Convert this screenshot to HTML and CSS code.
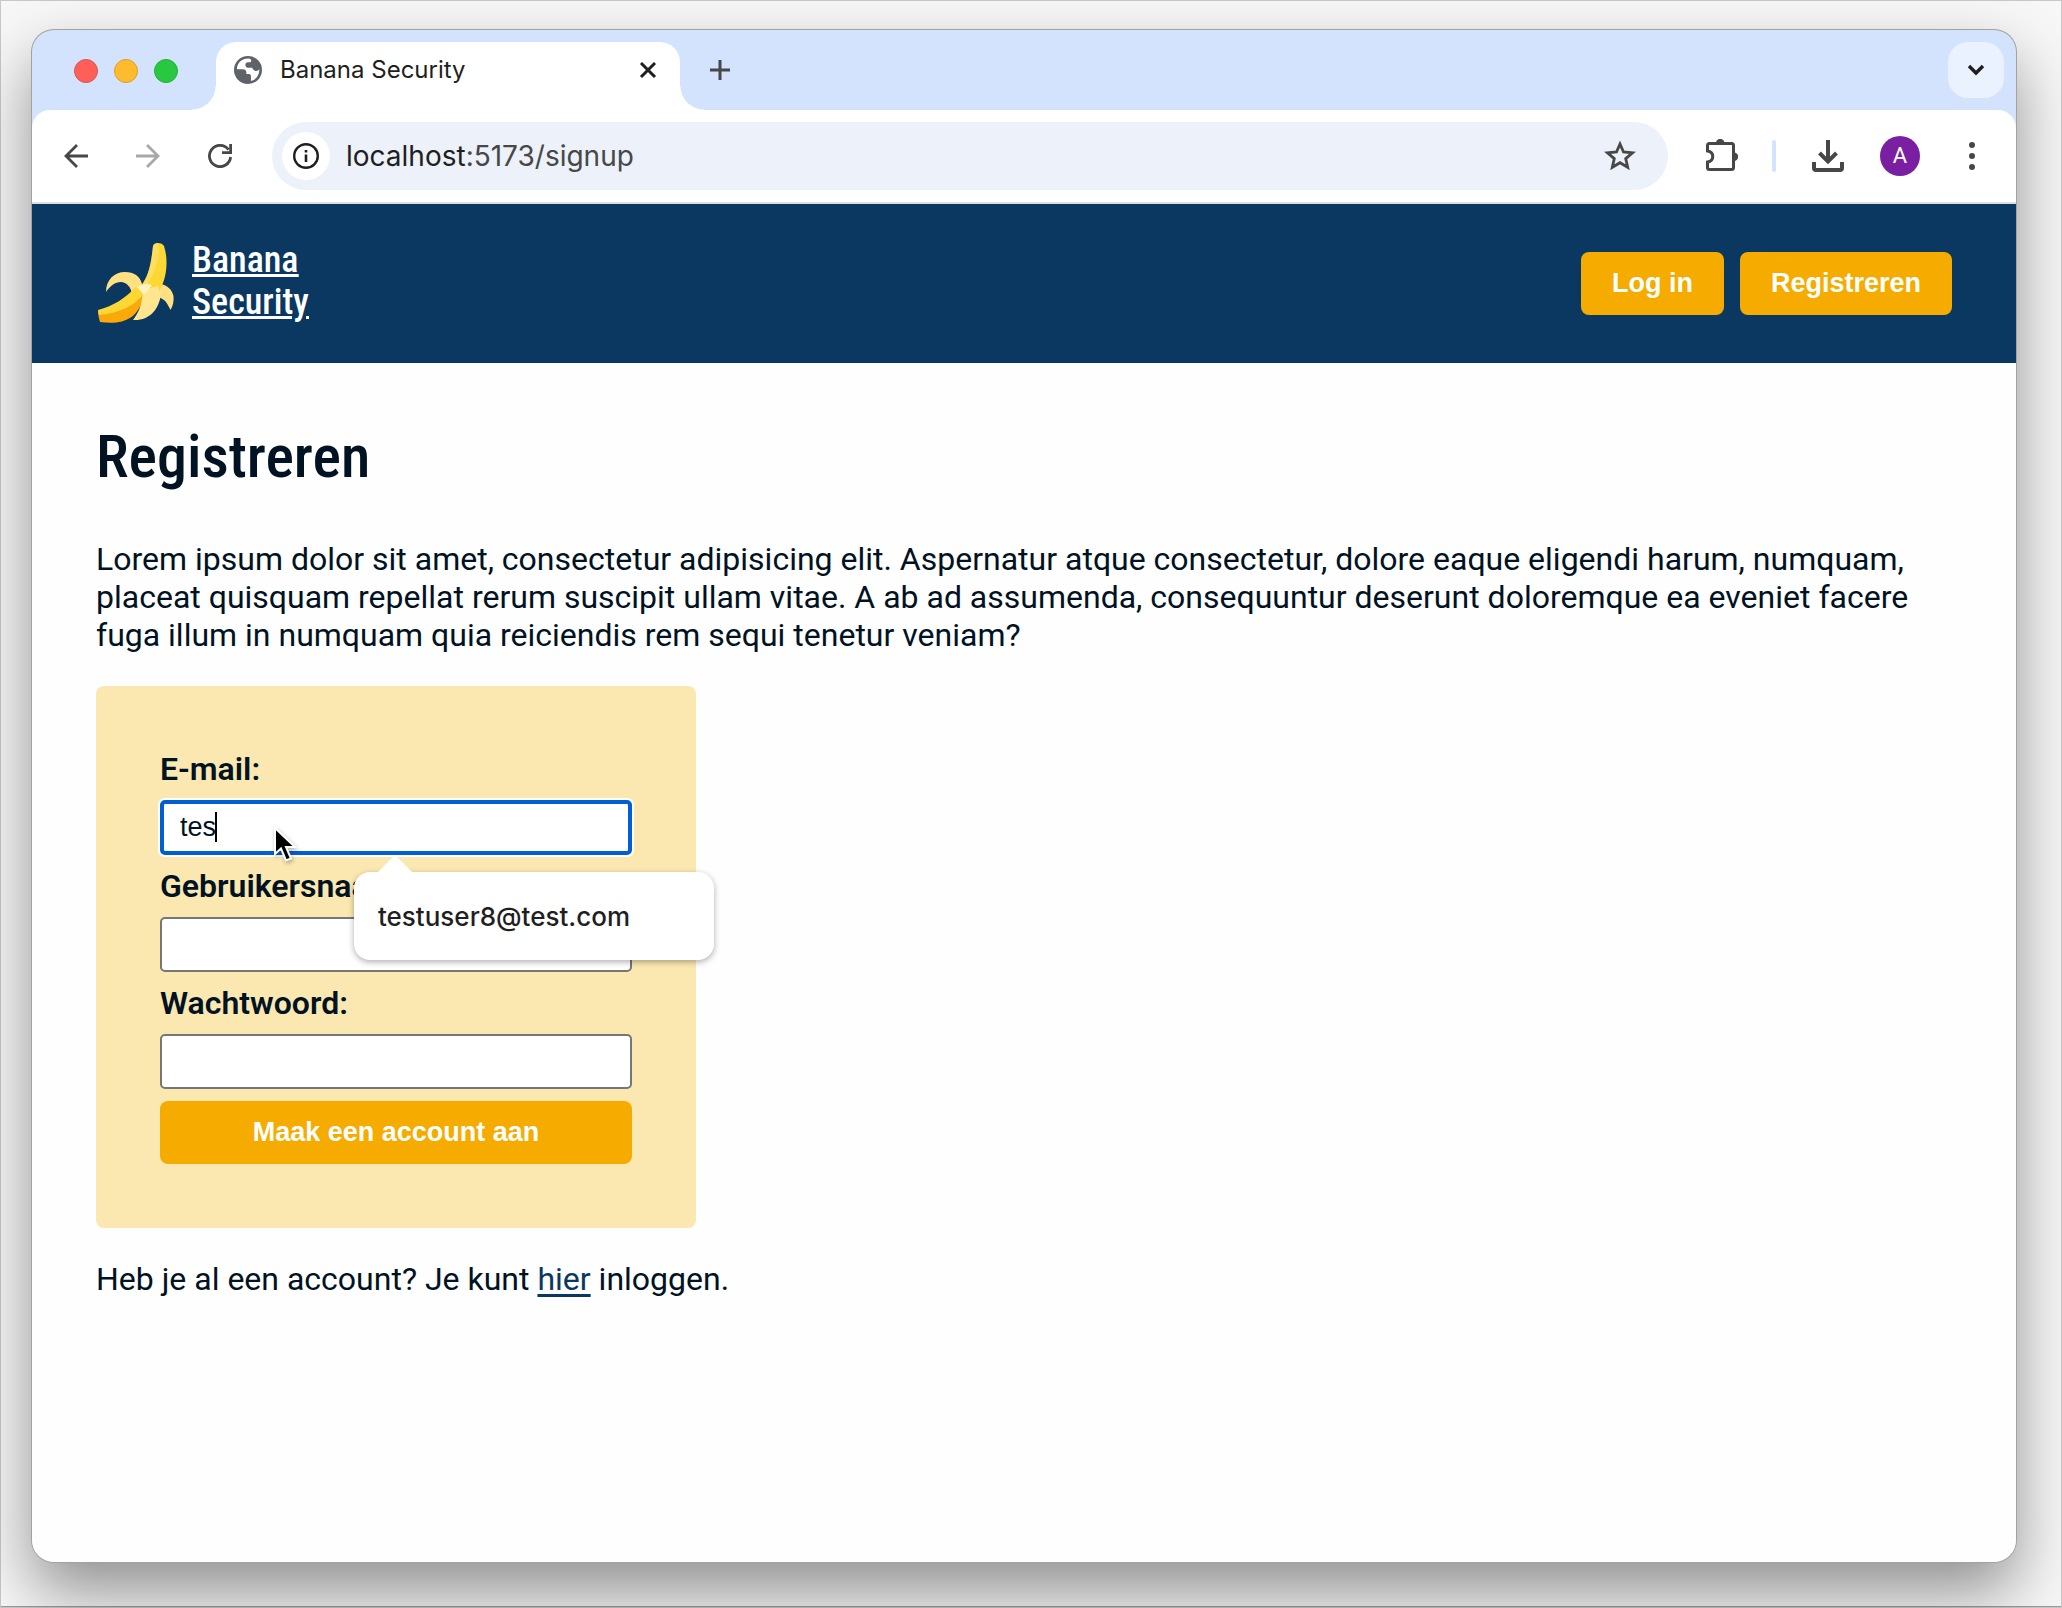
FILE: index.html
```html
<!DOCTYPE html>
<html lang="nl">
<head>
<meta charset="utf-8">
<meta name="viewport" content="width=device-width, initial-scale=1">
<title>Banana Security</title>
<link rel="stylesheet" href="styles.css">
</head>
<body>
<div class="window">
  <div class="tab-strip">
    <div class="lights">
      <span class="light light-close"></span>
      <span class="light light-minimise"></span>
      <span class="light light-zoom"></span>
    </div>
    <div class="tab">
      <svg class="globe" viewBox="25 19 86 86" aria-hidden="true">
        <circle cx="68" cy="62" r="43" fill="#5f6368"/>
        <path d="M72 27C48 25 34 42 34 60h20q8 0 9 8v6h9q5 1 5 6v16c18-5 26-20 26-36q-6 7-14 4-7-2-8-9H68q-8-1-8-9 0-8 8-8h7q3 0 3-5 0-4-6-6z" fill="#fff"/>
      </svg>
      <span class="tab-title">Banana Security</span>
      <button class="plain" type="button" aria-label="Close tab">
        <svg width="18" height="18" viewBox="0 0 18 18"><path d="M2 2l14 14M16 2L2 16" stroke="#1f1f1f" stroke-width="3" fill="none"/></svg>
      </button>
    </div>
    <button class="plain new-tab" type="button" aria-label="New tab">
      <svg width="20" height="20" viewBox="0 0 20 20"><path d="M10 0v20M0 10h20" stroke="#474747" stroke-width="3" fill="none"/></svg>
    </button>
    <button class="tab-search" type="button" aria-label="Search tabs">
      <svg width="18" height="12" viewBox="0 0 18 12"><path d="M2 2l7 7 7-7" stroke="#1f1f1f" stroke-width="3.4" fill="none"/></svg>
    </button>
  </div>

  <div class="toolbar">
    <div class="nav-buttons">
      <button class="plain" type="button" aria-label="Back">
        <svg width="24" height="24" viewBox="0 0 24 24"><path d="M24 12H2M13 1L2 12l11 11" stroke="#474747" stroke-width="2.8" fill="none"/></svg>
      </button>
      <button class="plain" type="button" aria-label="Forward">
        <svg width="24" height="24" viewBox="0 0 24 24"><path d="M0 12h22M11 1l11 11-11 11" stroke="#a8a8a8" stroke-width="2.8" fill="none"/></svg>
      </button>
      <button class="plain" type="button" aria-label="Reload">
        <svg width="24" height="24" viewBox="0 0 24 24"><path d="M22.6 13A10.6 10.6 0 1 1 20.5 5.6" stroke="#474747" stroke-width="2.8" fill="none"/><path d="M21.2 0H24v10H14V7.2h7.2z" fill="#474747"/></svg>
      </button>
    </div>
    <div class="omnibox">
      <button class="site-info" type="button" aria-label="View site information">
        <svg width="26" height="26" viewBox="0 0 26 26"><circle cx="13" cy="13" r="11.8" stroke="#1f1f1f" stroke-width="2.4" fill="none"/><path d="M13 11.5V19M13 7v2.6" stroke="#1f1f1f" stroke-width="2.6"/></svg>
      </button>
      <span class="url">localhost<span class="url-path">:5173/signup</span></span>
      <button class="plain" type="button" aria-label="Bookmark this tab">
        <svg width="32" height="32" viewBox="0 0 32 32"><path d="M16 4l3.5 8 9 .8-6.8 5.8 2 8.7L16 22.7l-7.7 4.6 2-8.7-6.8-5.8 9-.8z" stroke="#474747" stroke-width="2.8" fill="none"/></svg>
      </button>
    </div>
    <div class="tools">
      <button class="plain" type="button" aria-label="Extensions">
        <svg width="32" height="34" viewBox="0 1 32 34"><path d="M1.5 13V7.5q0-2 2-2h22q2 0 2 2v22q0 2-2 2h-22q-2 0-2-2V24c7-1 7-10 0-11z" stroke="#474747" stroke-width="3" fill="none"/><path d="M10 5a4.2 4.2 0 0 1 8.4 0zM28 14.5a4.2 4.2 0 0 1 0 8.4z" fill="#474747"/></svg>
      </button>
      <span class="divider"></span>
      <button class="plain" type="button" aria-label="Downloads">
        <svg width="32" height="32" viewBox="0 0 32 32"><path d="M16 0v21M7.5 13l8.5 8.5 8.5-8.5" stroke="#474747" stroke-width="4" fill="none"/><path d="M2 22v6q0 2 2 2h24q2 0 2-2v-6" stroke="#474747" stroke-width="4" fill="none"/></svg>
      </button>
      <button class="avatar" type="button" aria-label="Profile">A</button>
      <button class="plain" type="button" aria-label="Menu">
        <svg width="8" height="28" viewBox="0 0 8 28"><g fill="#474747"><circle cx="4" cy="3" r="3"/><circle cx="4" cy="14" r="3"/><circle cx="4" cy="25" r="3"/></g></svg>
      </button>
    </div>
  </div>

  <div class="page">
    <header class="site-header">
      <a class="brand" href="#">
        <svg width="80" height="84" viewBox="6 8 80 84" aria-hidden="true">
          <path d="M16 58c0-12 8-20 19-20 9 0 15 4 17 12l-2 14-8-2C42 53 36 48 31 48c-6 0-11 4-15 10z" fill="#ffe082"/>
          <path d="M70 50c8 1 12 6 13.5 12 .5 5-.5 10-3 14-2-4-4-8-6.5-10l-5-3z" fill="#ffe082"/>
          <path d="M63 12q1-3 5-3t6 3c4 12 3 27-1 37l-6 13-16-10c7-9 10-20 12-40z" fill="#fdd835"/>
          <path d="M63 12q1-3 5-3 2 7 0 15-3 14-10 26l-7 2c7-9 10-20 12-40z" fill="#ffe57a" opacity=".6"/>
          <path d="M8 77c0 4 1 7 2 11 22 3 38-2 44-26l-1-9c-10 12-22 18-45 24z" fill="#fba90a"/>
          <path d="M8 76c16-4 27-12 38-23l9 5c-10 14-25 21-46 23z" fill="#fdd835"/>
          <path d="M53 56l15-4 3 8c-2 16-12 27-28 26 6-8 9-15 10-30z" fill="#ffe68f"/>
          <path d="M47 53q8-5 15-2l-8 10z" fill="#fff3bf"/>
        </svg>
        <span class="brand-name">Banana<br>Security</span>
      </a>
      <nav class="site-nav">
        <button class="button" type="button">Log in</button>
        <button class="button" type="button">Registreren</button>
      </nav>
    </header>

    <main class="content">
      <h1 class="title">Registreren</h1>
      <p class="intro">Lorem ipsum dolor sit amet, consectetur adipisicing elit. Aspernatur atque consectetur, dolore eaque eligendi harum, numquam, placeat quisquam repellat rerum suscipit ullam vitae. A ab ad assumenda, consequuntur deserunt doloremque ea eveniet facere fuga illum in numquam quia reiciendis rem sequi tenetur veniam?</p>

      <form class="form">
        <label class="label" for="email">E-mail:</label>
        <div class="field">
          <input class="input input-focused" type="text" id="email" value="tes" autocomplete="off">
          <span class="caret"></span>
          <svg class="pointer" width="24" height="38" viewBox="0 0 24 38" aria-hidden="true"><path d="M2 2v26l6-5.5 5 12 5-2-5-11.5h9z" fill="#000" stroke="#fff" stroke-width="2"/></svg>
          <div class="suggestions"><span>testuser8@test.com</span></div>
        </div>
        <label class="label" for="username">Gebruikersnaam:</label>
        <div class="field"><input class="input" type="text" id="username"></div>
        <label class="label" for="password">Wachtwoord:</label>
        <div class="field"><input class="input" type="password" id="password"></div>
        <button class="button" type="submit">Maak een account aan</button>
      </form>

      <p class="outro">Heb je al een account? Je kunt <a class="link" href="#">hier</a> inloggen.</p>
    </main>
  </div>
</div>
</body>
</html>
```
FILE: styles.css
```css
*,
*::before,
*::after {
  box-sizing: border-box;
}

body {
  margin: 0;
  min-height: 100vh;
  display: flex;
  padding: 30px 46px 46px 32px;
  overflow: hidden;
  background: #f7f7f7;
  box-shadow: inset 0 0 0 1px #c8c8c8, inset 0 -2px 0 #9c9c9c;
  color: #011222;
  font-family: Roboto, sans-serif;
}

button {
  margin: 0;
  padding: 0;
  border: 0;
  background: none;
  cursor: pointer;
}

svg {
  display: block;
}

.window {
  flex: 1;
  min-width: 0;
  display: flex;
  flex-direction: column;
  border-radius: 22px;
  background: #d3e2fd;
  box-shadow: 0 0 0 1px #a2a2a2, 0 30px 64px rgba(0, 0, 0, 0.42);
}

/* Tab strip */
.tab-strip {
  display: flex;
  height: 80px;
  padding: 12px 12px 0 42px;
}

.lights {
  display: flex;
  gap: 16px;
  padding: 17px 38px 0 0;
  width: 142px;
  flex: none;
}

.light {
  width: 24px;
  height: 24px;
  border-radius: 50%;
  flex: none;
}

.light-close { background: #fe5f57; border: 1px solid #e0524b; }
.light-minimise { background: #febb2e; border: 1px solid #dfa023; }
.light-zoom { background: #28c840; border: 1px solid #24b039; }

.tab {
  position: relative;
  display: flex;
  align-items: center;
  width: 464px;
  height: 68px;
  padding: 0 23px 12px 18px;
  border-radius: 20px 20px 0 0;
  background: #fff;
}

.tab::before,
.tab::after {
  content: "";
  position: absolute;
  bottom: 0;
  width: 24px;
  height: 24px;
}

.tab::before {
  right: 100%;
  background: radial-gradient(circle at 0 0, transparent 23px, #fff 24px);
}

.tab::after {
  left: 100%;
  background: radial-gradient(circle at 100% 0, transparent 23px, #fff 24px);
}

.globe {
  width: 28px;
  height: 28px;
}

.tab-title {
  flex: 1;
  padding-left: 18px;
  color: #1f1f1f;
  font: 24px/28px Inter, sans-serif;
}

.new-tab {
  height: 56px;
  margin-left: 30px;
}

.tab-search {
  display: grid;
  place-items: center;
  width: 56px;
  height: 56px;
  margin-left: auto;
  border-radius: 20px;
  background: #eaf2ff;
}

/* Toolbar */
.toolbar {
  display: flex;
  align-items: center;
  height: 94px;
  padding: 0 40px 0 32px;
  border-bottom: 2px solid #dcdfe3;
  border-radius: 18px 18px 0 0;
  background: #fff;
}

.nav-buttons {
  display: flex;
  gap: 48px;
}

.omnibox {
  flex: 1;
  display: flex;
  align-items: center;
  height: 68px;
  margin: 0 38px 0 40px;
  padding: 0 32px 0 10px;
  border-radius: 34px;
  background: #ecf1fa;
}

.site-info {
  display: grid;
  place-items: center;
  width: 48px;
  height: 48px;
  border-radius: 50%;
  background: #fff;
}

.url {
  flex: 1;
  padding-left: 16px;
  color: #1f1f1f;
  font: 28px/34px Inter, sans-serif;
}

.url-path {
  color: #474747;
}

.tools {
  display: flex;
  align-items: center;
}

.divider {
  width: 4px;
  height: 32px;
  margin: 0 36px 0 34px;
  border-radius: 2px;
  background: #d3e2fd;
}

.avatar {
  width: 40px;
  height: 40px;
  margin: 0 48px 0 36px;
  border-radius: 50%;
  background: #7b1fa2;
  color: #fff;
  font: 22px/40px Roboto, sans-serif;
}

/* Site */
.page {
  flex: 1;
  border-radius: 0 0 22px 22px;
  background: #fefefe;
}

.site-header {
  display: flex;
  align-items: center;
  justify-content: space-between;
  height: 159px;
  padding: 0 64px;
  background: #0b3861;
}

.brand {
  display: flex;
  align-items: center;
  gap: 16px;
  color: #fff;
}

.brand-name {
  padding-bottom: 6px;
  font: 500 36px/42px "Roboto Condensed", "Open Sans Condensed", Roboto, sans-serif;
  text-decoration: underline;
}

.site-nav {
  display: flex;
  gap: 16px;
}

.button {
  height: 63px;
  padding: 0 31px;
  border-radius: 8px;
  background: #f6ab00;
  color: #fff;
  font: bold 27px/31px "Liberation Sans", Arial, sans-serif;
}

.content {
  padding: 64px;
}

.title {
  margin: 0 0 53px;
  font: 500 60px/60px "Roboto Condensed", "Open Sans Condensed", Roboto, sans-serif;
}

.intro,
.outro {
  margin: 0;
  font-size: 32px;
  line-height: 38px;
}

.form {
  display: flex;
  flex-direction: column;
  gap: 12px;
  max-width: 600px;
  margin: 32px 0;
  padding: 64px;
  border-radius: 8px;
  background: #fbe8b1;
}

.label {
  font-size: 32px;
  font-weight: 600;
  line-height: 38px;
}

.field {
  position: relative;
}

.input {
  display: block;
  width: 100%;
  height: 55px;
  padding: 0 18px;
  border: 2px solid #767676;
  border-radius: 5px;
  outline: 0;
  background: #fff;
  color: #011222;
  font: 27px/31px "Liberation Sans", Arial, sans-serif;
}

.input-focused {
  padding: 0 16px;
  border: 4px solid #0060d0;
  box-shadow: 0 0 0 2px #fff;
}

.caret {
  position: absolute;
  left: 55px;
  top: 12px;
  width: 2px;
  height: 30px;
  background: #000;
}

.pointer {
  position: absolute;
  left: 113px;
  top: 26px;
  z-index: 2;
  filter: drop-shadow(1px 2px 2px rgba(0, 0, 0, 0.3));
}

.suggestions {
  position: absolute;
  left: 194px;
  top: 72px;
  z-index: 1;
  display: flex;
  align-items: center;
  width: 360px;
  height: 88px;
  padding: 2px 24px 0;
  border-radius: 16px;
  background: #fff;
  box-shadow: 0 2px 6px rgba(0, 0, 0, 0.32);
  color: #1f1f1f;
  font: 500 26px/32px Inter, sans-serif;
}

.suggestions::before {
  content: "";
  position: absolute;
  left: 24px;
  bottom: 100%;
  border: 17px solid transparent;
  border-top: 0;
  border-bottom-color: #fff;
}

.link {
  color: #0b3861;
  text-decoration-thickness: 3px;
  text-underline-offset: 4px;
}
```
